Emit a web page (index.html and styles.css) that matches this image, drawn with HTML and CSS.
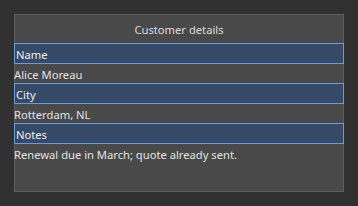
FILE: index.html
```html
<!DOCTYPE html>
<html lang="en">
<head>
    <meta charset="UTF-8">
    <title>Customer details</title>
    <link rel="stylesheet" href="styles.css">
</head>
<body>
    <div class="panel">
        <div class="title">Customer details</div>
        <div class="label">Name</div>
        <div class="value">Alice Moreau</div>
        <div class="label">City</div>
        <div class="value">Rotterdam, NL</div>
        <div class="label">Notes</div>
        <div class="value">Renewal due in March; quote already sent.</div>
    </div>
</body>
</html>
```
FILE: styles.css
```css
*{
    box-sizing:border-box;
}
body{
    margin:0px;
    padding:14px;
    background-color:#303030;
    font-family:"Noto Sans","Open Sans",sans-serif;
    font-size:11.2px;
}
.panel{
    width:330px;
    height:178px;
    background-color:#494949;
    box-shadow:inset 0 0 0 1px #5d5d5d;
    display:flex;
    flex-direction:column;
}
.title{
    height:29px;
    display:flex;
    align-items:center;
    justify-content:center;
    color:#dcdcdc;
    padding-top:1px;
}
.label{
    height:21px;
    border:1px solid #6b9cd6;
    background-color:#344a66;
    color:#eeeeee;
    padding-left:1px;
    padding-top:1px;
    display:flex;
    align-items:center;
}
.value{
    height:19px;
    color:#e2e2e2;
    padding-top:1px;
    display:flex;
    align-items:center;
}
```
